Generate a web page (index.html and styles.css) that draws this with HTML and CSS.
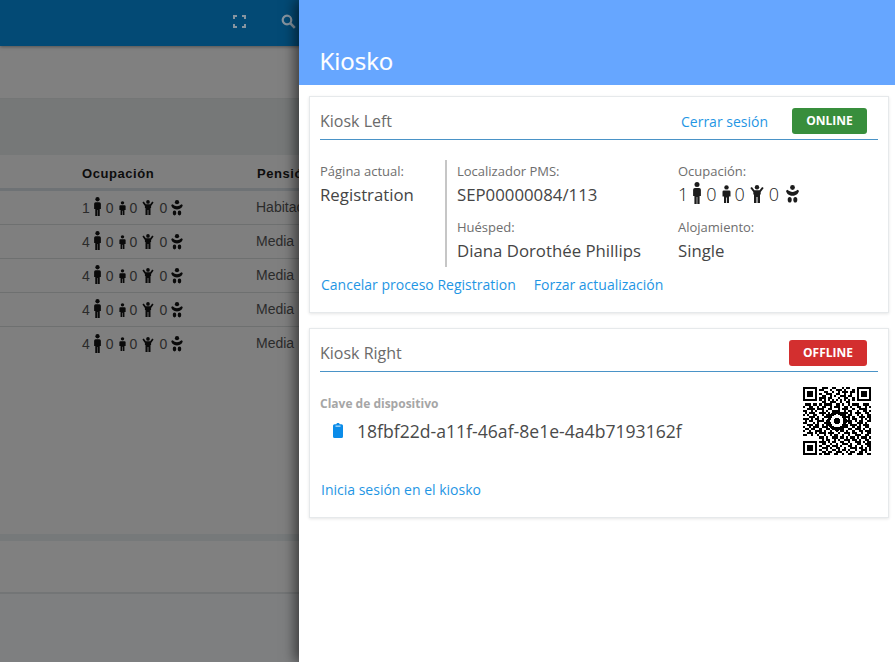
FILE: index.html
```html
<!DOCTYPE html>
<html lang="es">
<head>
<meta charset="utf-8">
<title>Kiosko</title>
<link rel="stylesheet" href="styles.css">
</head>
<body>
<svg class="defs" width="0" height="0" aria-hidden="true">
  <symbol id="adult" viewBox="0 0 10 22"><circle cx="5" cy="2.600" r="2.500"/><path d="M2.900 6h4.200A1.800 1.800 0 0 1 8.900 7.800V14H7.600v8H5.300v-7h-.6v7H2.400v-8H1.100V7.800A1.800 1.800 0 0 1 2.900 6z"/></symbol>
  <symbol id="teen" viewBox="0 0 9 18"><circle cx="4.500" cy="2.400" r="2.200"/><path d="M1.800 5.400h5.400A1.300 1.300 0 0 1 8.500 6.700V11.500H7V18H4.900v-5.500h-.8V18H2v-6.500H.5V6.700a1.300 1.300 0 0 1 1.300-1.300z"/></symbol>
  <symbol id="child" viewBox="0 0 14 18"><circle cx="7" cy="2.300" r="2.200"/><path d="M.3 2.900 1.900 1.900 4.400 5.200h5.200l2.500-3.300 1.600 1-3 4.200v2.400H10V18H7.500v-6h-1v6H4V9.500H3.300V7.100z"/></symbol>
  <symbol id="baby" viewBox="0 0 13 18"><circle cx="6.500" cy="2.500" r="2.400"/><path d="M0 5.700 1.600 4.800C3 6.300 4.800 6.900 6.500 6.900S10 6.300 11.400 4.800L13 5.700C12.500 8.200 10.500 10.700 6.500 10.700S.5 8.200 0 5.700z"/><ellipse cx="3.700" cy="14.700" rx="2" ry="2.800"/><ellipse cx="9.300" cy="14.700" rx="2" ry="2.800"/></symbol>
</svg>

<div class="page">
  <header class="topbar">
    <svg class="top-icon expand" viewBox="0 0 13 13" width="13" height="13"><path d="M1 4V1H4M9 1h3V4M12 9v3H9M4 12H1V9" fill="none" stroke="#8795a0" stroke-width="2"/></svg>
    <svg class="top-icon search" viewBox="0 0 15 15" width="15" height="15"><circle cx="6" cy="6" r="4.300" fill="none" stroke="#8795a0" stroke-width="2.200"/><path d="M9.200 9.200 13.800 13.800" stroke="#8795a0" stroke-width="2.600"/></svg>
  </header>
  <div class="toolbar"></div>
  <div class="filters"></div>
  <div class="table">
    <div class="row head"><span class="occ">Ocupación</span><span>Pensión</span></div>
    <div class="row">
      <span class="occ"><span class="n">1</span><svg class="i-adult"><use href="#adult"/></svg><span class="n">0</span><svg class="i-teen"><use href="#teen"/></svg><span class="n">0</span><svg class="i-child"><use href="#child"/></svg><span class="n">0</span><svg class="i-baby"><use href="#baby"/></svg></span>
      <span class="board">Habitación</span>
    </div>
    <div class="row">
      <span class="occ"><span class="n">4</span><svg class="i-adult"><use href="#adult"/></svg><span class="n">0</span><svg class="i-teen"><use href="#teen"/></svg><span class="n">0</span><svg class="i-child"><use href="#child"/></svg><span class="n">0</span><svg class="i-baby"><use href="#baby"/></svg></span>
      <span class="board">Media</span>
    </div>
    <div class="row">
      <span class="occ"><span class="n">4</span><svg class="i-adult"><use href="#adult"/></svg><span class="n">0</span><svg class="i-teen"><use href="#teen"/></svg><span class="n">0</span><svg class="i-child"><use href="#child"/></svg><span class="n">0</span><svg class="i-baby"><use href="#baby"/></svg></span>
      <span class="board">Media</span>
    </div>
    <div class="row">
      <span class="occ"><span class="n">4</span><svg class="i-adult"><use href="#adult"/></svg><span class="n">0</span><svg class="i-teen"><use href="#teen"/></svg><span class="n">0</span><svg class="i-child"><use href="#child"/></svg><span class="n">0</span><svg class="i-baby"><use href="#baby"/></svg></span>
      <span class="board">Media</span>
    </div>
    <div class="row last">
      <span class="occ"><span class="n">4</span><svg class="i-adult"><use href="#adult"/></svg><span class="n">0</span><svg class="i-teen"><use href="#teen"/></svg><span class="n">0</span><svg class="i-child"><use href="#child"/></svg><span class="n">0</span><svg class="i-baby"><use href="#baby"/></svg></span>
      <span class="board">Media</span>
    </div>
  </div>
  <div class="band"></div>
  <div class="section"></div>
</div>

<aside class="drawer">
  <h1 class="drawer-title">Kiosko</h1>
  <div class="drawer-body">
    <section class="card card-left">
      <div class="card-head">
        <h2>Kiosk Left</h2>
        <a class="link logout">Cerrar sesión</a>
        <span class="status online">ONLINE</span>
      </div>
      <div class="info">
        <div class="info-page">
          <div class="label">Página actual:</div>
          <div class="value">Registration</div>
        </div>
        <div class="info-grid">
          <div>
            <div class="label">Localizador PMS:</div>
            <div class="value">SEP00000084/113</div>
          </div>
          <div>
            <div class="label">Ocupación:</div>
            <div class="value occ-big"><span>1</span><svg class="b-adult"><use href="#adult"/></svg><span>0</span><svg class="b-teen"><use href="#teen"/></svg><span>0</span><svg class="b-child"><use href="#child"/></svg><span>0</span><svg class="b-baby"><use href="#baby"/></svg></div>
          </div>
          <div>
            <div class="label">Huésped:</div>
            <div class="value">Diana Dorothée Phillips</div>
          </div>
          <div>
            <div class="label">Alojamiento:</div>
            <div class="value">Single</div>
          </div>
        </div>
      </div>
      <div class="actions">
        <a class="link">Cancelar proceso Registration</a>
        <a class="link">Forzar actualización</a>
      </div>
    </section>

    <section class="card card-right">
      <div class="card-head">
        <h2>Kiosk Right</h2>
        <span class="status offline">OFFLINE</span>
      </div>
      <div class="device">
        <div class="device-key">
          <div class="key-label">Clave de dispositivo</div>
          <div class="key-row">
            <svg class="clip" viewBox="0 0 10 15" width="10" height="15"><path d="M3.300 1.300C3.500.5 4.100 0 5 0s1.500.5 1.700 1.300H8.500A1.500 1.500 0 0 1 10 2.800V13.500A1.500 1.500 0 0 1 8.500 15h-7A1.500 1.500 0 0 1 0 13.500V2.800A1.500 1.500 0 0 1 1.500 1.300z" fill="#0b8ce9"/><rect x="2.500" y="2.600" width="5" height="1.100" fill="#cfe8fb"/></svg>
            <span class="key">18fbf22d-a11f-46af-8e1e-4a4b7193162f</span>
          </div>
        </div>
        <svg class="qr" viewBox="0 0 33 33" width="68" height="68" role="img" aria-label="QR">
          <path fill="none" stroke="#000" d="M0 .5h7M9 .5h3M14 .5h2M19 .5h1M21 .5h2M26 .5h7M0 1.500h1M6 1.500h1M8 1.500h2M13 1.500h1M16 1.500h3M20 1.500h1M24 1.500h1M26 1.500h1M32 1.500h1M0 2.500h1M2 2.500h3M6 2.500h1M10 2.500h2M14 2.500h1M17 2.500h1M19 2.500h3M23 2.500h2M26 2.500h1M28 2.500h3M32 2.500h1M0 3.500h1M2 3.500h3M6 3.500h1M8 3.500h1M11 3.500h3M16 3.500h2M20 3.500h1M23 3.500h1M26 3.500h1M28 3.500h3M32 3.500h1M0 4.500h1M2 4.500h3M6 4.500h1M9 4.500h2M13 4.500h1M15 4.500h1M18 4.500h3M22 4.500h2M26 4.500h1M28 4.500h3M32 4.500h1M0 5.500h1M6 5.500h1M8 5.500h3M12 5.500h2M17 5.500h1M20 5.500h2M24 5.500h1M26 5.500h1M32 5.500h1M0 6.500h7M8 6.500h1M10 6.500h1M12 6.500h1M14 6.500h1M16 6.500h1M18 6.500h1M20 6.500h1M22 6.500h1M24 6.500h1M26 6.500h7M9 7.500h2M13 7.500h3M18 7.500h1M21 7.500h2M1 8.500h3M5 8.500h2M8 8.500h1M10 8.500h4M16 8.500h2M19 8.500h1M22 8.500h1M24 8.500h3M29 8.500h3M0 9.500h1M3 9.500h2M7 9.500h1M9 9.500h2M13 9.500h1M15 9.500h3M20 9.500h2M23 9.500h1M26 9.500h2M30 9.500h1M32 9.500h1M2 10.500h4M7 10.500h3M12 10.500h2M17 10.500h1M19 10.500h3M24 10.500h1M27 10.500h4M0 11.500h2M4 11.500h1M6 11.500h1M9 11.500h1M11 11.500h1M14 11.500h4M20 11.500h1M22 11.500h2M26 11.500h1M29 11.500h2M32 11.500h1M1 12.500h1M3 12.500h3M8 12.500h3M12 12.500h1M19 12.500h3M23 12.500h1M25 12.500h3M30 12.500h2M0 13.500h1M2 13.500h1M5 13.500h2M9 13.500h1M11 13.500h2M20 13.500h1M22 13.500h2M26 13.500h1M28 13.500h1M31 13.500h2M3 14.500h3M7 14.500h1M10 14.500h2M21 14.500h2M24 14.500h1M27 14.500h3M31 14.500h2M0 15.500h3M4 15.500h1M6 15.500h2M9 15.500h1M22 15.500h1M24 15.500h2M28 15.500h1M30 15.500h1M32 15.500h1M1 16.500h1M3 16.500h2M7 16.500h3M11 16.500h1M21 16.500h3M25 16.500h1M27 16.500h2M31 16.500h2M0 17.500h2M5 17.500h1M7 17.500h1M10 17.500h2M22 17.500h2M26 17.500h3M30 17.500h1M2 18.500h3M6 18.500h2M9 18.500h1M11 18.500h1M21 18.500h1M23 18.500h3M27 18.500h1M29 18.500h3M0 19.500h1M3 19.500h1M5 19.500h3M9 19.500h3M20 19.500h2M24 19.500h1M26 19.500h2M30 19.500h2M1 20.500h2M4 20.500h2M8 20.500h1M11 20.500h2M15 20.500h3M19 20.500h1M22 20.500h2M25 20.500h3M29 20.500h1M32 20.500h1M0 21.500h1M3 21.500h1M6 21.500h3M10 21.500h1M13 21.500h1M16 21.500h1M18 21.500h2M21 21.500h1M24 21.500h1M27 21.500h2M30 21.500h3M2 22.500h3M6 22.500h1M8 22.500h3M12 22.500h3M17 22.500h1M20 22.500h3M24 22.500h2M28 22.500h1M31 22.500h2M0 23.500h2M4 23.500h1M7 23.500h1M10 23.500h1M13 23.500h1M15 23.500h2M19 23.500h1M22 23.500h1M25 23.500h3M30 23.500h2M8 24.500h2M11 24.500h1M14 24.500h3M18 24.500h2M21 24.500h1M23 24.500h2M26 24.500h1M28 24.500h3M32 24.500h1M9 25.500h1M11 25.500h2M15 25.500h1M17 25.500h1M20 25.500h3M24 25.500h2M27 25.500h1M30 25.500h2M0 26.500h7M8 26.500h3M12 26.500h1M14 26.500h2M18 26.500h2M22 26.500h1M25 26.500h3M29 26.500h1M31 26.500h2M0 27.500h1M6 27.500h1M9 27.500h2M13 27.500h1M16 27.500h1M19 27.500h3M23 27.500h1M26 27.500h2M30 27.500h3M0 28.500h1M2 28.500h3M6 28.500h1M8 28.500h1M11 28.500h2M14 28.500h3M18 28.500h1M22 28.500h2M25 28.500h1M28 28.500h1M31 28.500h2M0 29.500h1M2 29.500h3M6 29.500h1M9 29.500h3M13 29.500h1M16 29.500h2M20 29.500h1M23 29.500h3M27 29.500h2M30 29.500h1M32 29.500h1M0 30.500h1M2 30.500h3M6 30.500h1M8 30.500h1M11 30.500h1M14 30.500h2M17 30.500h1M19 30.500h2M22 30.500h1M25 30.500h1M28 30.500h3M32 30.500h1M0 31.500h1M6 31.500h1M9 31.500h2M12 31.500h2M16 31.500h3M21 31.500h1M23 31.500h2M27 31.500h2M30 31.500h1M0 32.500h7M8 32.500h1M10 32.500h3M15 32.500h2M19 32.500h1M22 32.500h2M26 32.500h3M31 32.500h2"/>
          <circle cx="16.500" cy="16.500" r="4.800"/><circle cx="16.500" cy="16.500" r="3.200" fill="#fff"/><circle cx="16.500" cy="16.500" r="1.500"/>
        </svg>
      </div>
      <div class="actions login">
        <a class="link">Inicia sesión en el kiosko</a>
      </div>
    </section>
  </div>
</aside>
</body>
</html>
```
FILE: styles.css
```css
* { box-sizing: border-box; }
html, body { margin: 0; height: 100%; overflow: hidden; }
body { position: relative; width: 895px; height: 662px; background: #7e7f80; font-family: "Open Sans", sans-serif; }
.defs { position: absolute; }

.page { height: 662px; overflow: hidden; }
.topbar { height: 46px; background: #034a75; box-shadow: 0 1px 3px rgba(0,0,0,.35); display: flex; align-items: flex-start; padding: 15px 0 0 233px; position: relative; }
.top-icon { display: block; flex: none; }
.search { margin-left: 35px; margin-top: -1px; }
.toolbar { height: 53px; background: #808080; border-bottom: 1px solid #747676; }
.filters { height: 56px; background: #767878; }
.table { height: 379px; background: #7f7f7f; font-family: "Liberation Sans", sans-serif; font-size: 14px; color: #2b2b2b; }
.row { height: 34px; display: grid; grid-template-columns: 175px 1fr; padding-left: 82px; align-items: center; border-bottom: 1px solid #6e7070; white-space: nowrap; overflow: hidden; }
.row.last { border-bottom: 0; }
.row.head { height: 36px; border-bottom: 3px solid #6e7275; font-weight: 700; font-size: 13px; color: #0d0d0d; letter-spacing: .55px; padding-top: 3px; }
.board { margin: -2px 0 0 -1px; }
.occ { display: flex; align-items: center; }
.n { font-size: 14px; color: #2b2b2b; width: 7.800px; text-align: center; }
.occ svg { display: block; fill: #0a0a0a; flex: none; }
.i-adult { width: 9px; height: 19px; margin: -2px 4px 0 3px; }
.i-teen { width: 7px; height: 14px; margin: 0 4px 0 5px; }
.i-child { width: 12px; height: 15px; margin: 0 5px 0 5px; }
.i-baby { width: 12px; height: 16px; margin: 0 0 0 4px; }
.band { height: 7px; background: #76797a; }
.section { height: 53px; background: #808080; border-bottom: 2px solid #737576; }

.drawer { position: absolute; top: 0; right: 0; width: 596px; height: 662px; background: #fff; box-shadow: -4px 0 12px rgba(0,0,0,.55); }
.drawer-title { margin: 0; height: 85px; background: #66a6ff; color: #fff; font-size: 24px; font-weight: 400; line-height: 33px; padding: 44px 0 0 20.500px; -webkit-text-stroke: .2px #fff; }
.drawer-body { display: flex; flex-direction: column; gap: 15px; padding: 11px 6px 0 10px; }
.card { width: 580px; border: 1px solid #e6e9eb; box-shadow: 0 1px 3px rgba(0,0,0,.1); padding: 0 10px; background: #fff; }
.card-left { height: 217px; }
.card-right { height: 190px; }
.card-head { height: 43px; display: flex; align-items: center; border-bottom: 1px solid #4a93c7; }
.card-head h2 { margin: 0 auto 0 0; font-size: 16px; font-weight: 400; color: #6b6b6b; position: relative; top: 3px; }
.link { font-size: 14px; color: #1f96e4; white-space: nowrap; }
.logout { margin-right: 24px; position: relative; top: 3px; }
.status { height: 26px; border-radius: 3px; color: #fff; font-size: 12px; font-weight: 700; display: flex; align-items: center; justify-content: center; margin-right: 11px; position: relative; top: 3px; padding-bottom: 1px; }
.online { width: 75px; background: #388e3c; }
.offline { width: 78px; background: #d32f2f; }

.info { display: flex; margin-top: 20px; height: 107px; }
.info-page { width: 125px; padding-top: 2px; }
.info-grid { border-left: 2px solid #c6c6c6; padding: 2px 0 0 10px; display: grid; grid-template-columns: 221px 1fr; grid-auto-rows: 56px; flex: 1; }
.label { font-size: 13px; color: #6e6e6e; line-height: 18px; }
.value { font-size: 16.800px; color: #454545; line-height: 22px; margin-top: 4px; white-space: nowrap; }
.occ-big { display: flex; align-items: center; font-size: 18px; font-weight: 300; color: #1f1f1f; margin-top: 3px; }
.occ-big svg { display: block; fill: #1c1c1c; flex: none; }
.b-adult { width: 10px; height: 22px; margin: -3px 4px 0 4px; }
.b-teen { width: 9px; height: 18px; margin: -1px 4px 0 5px; }
.b-child { width: 14px; height: 18px; margin: -1px 5px 0 5px; }
.b-baby { width: 13px; height: 18px; margin: 0 0 0 7px; }

.actions { display: flex; gap: 18px; margin-top: 8px; padding-left: 1px; line-height: 20px; }
.device { display: flex; justify-content: space-between; padding-right: 7px; margin-top: 15px; height: 69px; }
.key-label { font-size: 12px; font-weight: 700; color: #a6a6a6; line-height: 16px; margin-top: 9px; }
.key-row { display: flex; align-items: center; margin-top: 7px; padding-left: 13px; }
.clip { display: block; flex: none; margin: -1px 14px 0 0; }
.key { font-size: 17.600px; color: #4a4a4a; line-height: 24px; }
.qr { display: block; flex: none; shape-rendering: crispEdges; }
.login { margin-top: 24px; }
```
